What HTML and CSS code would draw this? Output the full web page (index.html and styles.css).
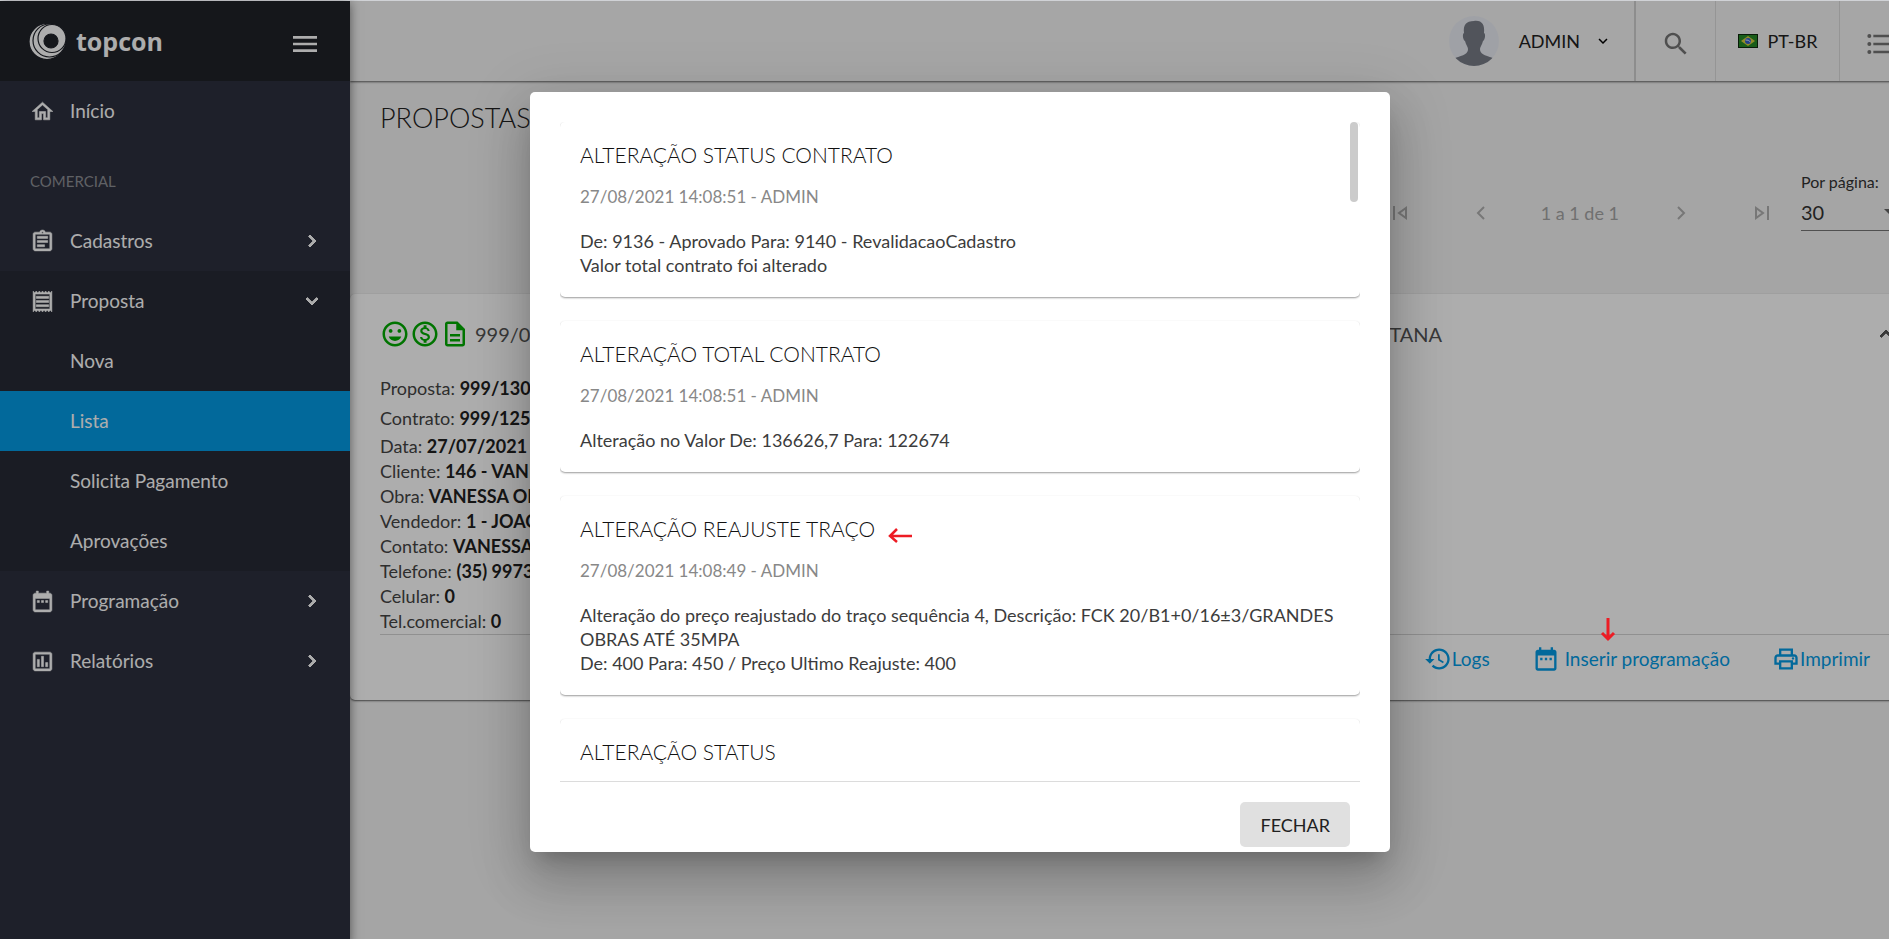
FILE: index.html
```html
<!DOCTYPE html>
<html lang="pt-br">
<head>
    <meta charset="UTF-8">
    <meta name="viewport" content="width=device-width, initial-scale=1.0">
    <title>Topcon - Propostas</title>
    <link rel="stylesheet" href="styles.css">
</head>
<body>
    <div class="app">
        <!-- Menu lateral -->
        <aside class="sidebar">
            <div class="brand">
                <div class="logo">
                    <svg width="38" height="37" viewBox="0 0 38 37" fill="#fff" stroke="#1f2229" stroke-width="1.2">
                        <circle cx="18" cy="18.5" r="18"/>
                        <circle cx="20.500" cy="17.500" r="16.500"/>
                        <circle cx="23" cy="15.500" r="14"/>
                        <circle cx="22" cy="18" r="7" fill="#1f2229"/>
                    </svg>
                    <span>topcon</span>
                </div>
                <button class="icon-button" type="button" aria-label="Menu">
                    <svg width="32" height="32" viewBox="0 0 24 24"><path d="M3 18h18v-2H3v2zm0-5h18v-2H3v2zm0-7v2h18V6H3z"/></svg>
                </button>
            </div>
            <nav class="menu">
                <a class="menu-item" href="#">
                    <svg class="menu-icon" viewBox="0 0 24 24"><path d="M12 5.690l5 4.500V18h-2v-6H9v6H7v-7.810l5-4.500M12 3L2 12h3v8h6v-6h2v6h6v-8h3L12 3z"/></svg>
                    <span>Início</span>
                </a>
                <h3 class="menu-group">COMERCIAL</h3>
                <a class="menu-item" href="#">
                    <svg class="menu-icon" viewBox="0 0 24 24"><path d="M7 15h7v2H7zm0-4h10v2H7zm0-4h10v2H7zm12-4h-4.180C14.400 1.840 13.300 1 12 1c-1.300 0-2.400.840-2.820 2H5c-1.100 0-2 .9-2 2v14c0 1.100.9 2 2 2h14c1.100 0 2-.9 2-2V5c0-1.100-.9-2-2-2zm-7-.25c.410 0 .750.340.750.750s-.340.750-.750.750-.750-.340-.750-.750.340-.750.750-.750zM19 19H5V5h14v14z"/></svg>
                    <span>Cadastros</span>
                    <svg class="menu-arrow" viewBox="0 0 24 24"><path d="M10 6L8.590 7.410 13.170 12l-4.580 4.590L10 18l6-6z"/></svg>
                </a>
                <div class="submenu">
                    <a class="menu-item" href="#">
                        <svg class="menu-icon" viewBox="0 0 24 24"><path d="M19.500 3.500L18 2l-1.500 1.500L15 2l-1.500 1.500L12 2l-1.500 1.500L9 2 7.500 3.500 6 2 4.500 3.500 3 2v20l1.500-1.500L6 22l1.500-1.500L9 22l1.500-1.500L12 22l1.500-1.500L15 22l1.500-1.500L18 22l1.500-1.500L21 22V2l-1.500 1.500zM19 19.090H5V4.910h14v14.180zM6 15h12v2H6zm0-4h12v2H6zm0-4h12v2H6z"/></svg>
                        <span>Proposta</span>
                        <svg class="menu-arrow" viewBox="0 0 24 24"><path d="M16.590 8.590L12 13.170 7.410 8.590 6 10l6 6 6-6z"/></svg>
                    </a>
                    <a class="menu-item sub" href="#"><span>Nova</span></a>
                    <a class="menu-item sub active" href="#"><span>Lista</span></a>
                    <a class="menu-item sub" href="#"><span>Solicita Pagamento</span></a>
                    <a class="menu-item sub" href="#"><span>Aprovações</span></a>
                </div>
                <a class="menu-item" href="#">
                    <svg class="menu-icon" viewBox="0 0 24 24"><path d="M9 11H7v2h2v-2zm4 0h-2v2h2v-2zm4 0h-2v2h2v-2zm2-7h-1V2h-2v2H8V2H6v2H5c-1.110 0-2 .9-2 2v14c0 1.100.890 2 2 2h14c1.100 0 2-.9 2-2V6c0-1.100-.9-2-2-2zm0 16H5V9h14v11z"/></svg>
                    <span>Programação</span>
                    <svg class="menu-arrow" viewBox="0 0 24 24"><path d="M10 6L8.590 7.410 13.170 12l-4.580 4.590L10 18l6-6z"/></svg>
                </a>
                <a class="menu-item" href="#">
                    <svg class="menu-icon" viewBox="0 0 24 24"><path d="M9 17H7v-7h2v7zm4 0h-2V7h2v10zm4 0h-2v-4h2v4zm2 2H5V5h14v14zm0-16H5c-1.100 0-2 .9-2 2v14c0 1.100.9 2 2 2h14c1.100 0 2-.9 2-2V5c0-1.100-.9-2-2-2z"/></svg>
                    <span>Relatórios</span>
                    <svg class="menu-arrow" viewBox="0 0 24 24"><path d="M10 6L8.590 7.410 13.170 12l-4.580 4.590L10 18l6-6z"/></svg>
                </a>
            </nav>
        </aside>

        <div class="main">
            <!-- Barra superior -->
            <header class="toolbar">
                <button class="user" type="button">
                    <svg class="avatar" width="50" height="50" viewBox="0 0 50 50">
                        <defs><clipPath id="round"><circle cx="25" cy="25" r="25"/></clipPath></defs>
                        <circle cx="25" cy="25" r="25" fill="#ebeef5"/>
                        <path clip-path="url(#round)" d="M25 5c8-1 11 4 10 12 2 1 1 7-1 8-1 4-3 6-3 8 0 5 4 6 13 9v8H6v-8c9-3 13-4 13-9 0-2-2-4-3-8-2-1-3-7-1-8C14 9 17 5 25 5z" fill="#787c87"/>
                    </svg>
                    <span>ADMIN</span>
                    <svg width="18" height="18" viewBox="0 0 24 24"><path d="M16.590 8.590L12 13.170 7.410 8.590 6 10l6 6 6-6z"/></svg>
                </button>
                <button class="tool search" type="button" aria-label="Pesquisar">
                    <svg width="30" height="30" viewBox="0 0 24 24" fill="#757575"><path d="M15.500 14h-.790l-.280-.270C15.410 12.590 16 11.110 16 9.500 16 5.910 13.090 3 9.500 3S3 5.910 3 9.500 5.910 16 9.500 16c1.610 0 3.090-.590 4.230-1.570l.270.280v.790l5 4.990L20.490 19l-4.990-5zm-6 0C7.010 14 5 11.990 5 9.500S7.010 5 9.500 5 14 7.010 14 9.500 11.990 14 9.500 14z"/></svg>
                </button>
                <button class="tool language" type="button">
                    <svg width="20" height="14" viewBox="0 0 20 14"><path fill="#0c290c" d="M0 0h20v14H0z"/><path fill="#268a26" d="M1 1h18v12H1z"/><path fill="#d8cf3c" d="M10 2l7 5-7 5-7-5z"/><circle cx="10" cy="7" r="3" fill="#3460c8"/><path d="M7.500 6q3-.5 5 2" stroke="#dfe8ff" fill="none"/></svg>
                    <span>PT-BR</span>
                </button>
                <button class="tool" type="button" aria-label="Atalhos">
                    <svg width="32" height="32" viewBox="0 0 24 24" fill="#757575"><path d="M4 10.500a1.500 1.500 0 1 0 0 3 1.500 1.500 0 0 0 0-3zm0-6a1.500 1.500 0 1 0 0 3 1.500 1.500 0 0 0 0-3zm0 12a1.500 1.500 0 1 0 0 3 1.500 1.500 0 0 0 0-3zM7 19h14v-2H7v2zm0-6h14v-2H7v2zm0-8v2h14V5H7z"/></svg>
                </button>
            </header>

            <main class="content">
                <h1>PROPOSTAS</h1>
                <div class="paginator">
                    <button class="page-button" type="button" disabled aria-label="Primeira"><svg viewBox="0 0 24 24"><path d="M5 5v14M17 7v10l-7-5z"/></svg></button>
                    <button class="page-button" type="button" disabled aria-label="Anterior"><svg viewBox="0 0 24 24"><path d="M15 6l-6 6 6 6"/></svg></button>
                    <span class="page-range">1 a 1 de 1</span>
                    <button class="page-button" type="button" disabled aria-label="Próxima"><svg viewBox="0 0 24 24"><path d="M9 6l6 6-6 6"/></svg></button>
                    <button class="page-button" type="button" disabled aria-label="Última"><svg viewBox="0 0 24 24"><path d="M19 5v14M7 7v10l7-5z"/></svg></button>
                    <div class="page-size">
                        <label for="pageSize">Por página:</label>
                        <div class="select-wrap">
                            <select id="pageSize">
                                <option>30</option>
                                <option>60</option>
                            </select>
                            <svg width="12" height="6" viewBox="0 0 12 6"><path d="M0 0h12L6 6z" fill="#666"/></svg>
                        </div>
                    </div>
                </div>

                <section class="proposal">
                    <div class="proposal-head">
                        <div class="status">
                            <svg viewBox="0 0 24 24"><path d="M11.990 2C6.470 2 2 6.480 2 12s4.470 10 9.990 10C17.520 22 22 17.520 22 12S17.520 2 11.990 2zM12 20c-4.420 0-8-3.580-8-8s3.580-8 8-8 8 3.580 8 8-3.580 8-8 8zm3.500-9c.830 0 1.500-.670 1.500-1.500S16.330 8 15.500 8 14 8.670 14 9.500s.670 1.500 1.500 1.500zm-7 0c.830 0 1.500-.670 1.500-1.500S9.330 8 8.500 8 7 8.670 7 9.500 7.670 11 8.500 11zM7 14c.8 2.300 2.700 3.500 5 3.500s4.200-1.200 5-3.500z"/></svg>
                            <svg viewBox="0 0 24 24"><path d="M12 2C6.480 2 2 6.480 2 12s4.480 10 10 10 10-4.480 10-10S17.520 2 12 2zm0 18c-4.410 0-8-3.590-8-8s3.590-8 8-8 8 3.590 8 8-3.590 8-8 8zm.310-8.860c-1.770-.450-2.340-.940-2.340-1.670 0-.840.790-1.430 2.100-1.430 1.380 0 1.900.660 1.940 1.640h1.710c-.050-1.340-.870-2.570-2.490-2.970V5H10.900v1.690c-1.510.320-2.720 1.300-2.720 2.810 0 1.790 1.490 2.690 3.660 3.210 1.950.460 2.340 1.150 2.340 1.870 0 .530-.390 1.390-2.100 1.390-1.600 0-2.230-.720-2.320-1.640H8.040c.1 1.700 1.360 2.660 2.860 2.970V19h2.340v-1.670c1.520-.290 2.720-1.160 2.730-2.770-.010-2.200-1.900-2.960-3.660-3.420z"/></svg>
                            <svg viewBox="0 0 24 24"><path d="M8 16h8v2H8zm0-4h8v2H8zm6-10H6c-1.100 0-2 .9-2 2v16c0 1.100.890 2 1.990 2H18c1.100 0 2-.9 2-2V8l-6-6zm4 18H6V4h7v5h5v11z"/></svg>
                            <span>999/00130</span>
                        </div>
                        <div class="proposal-city">SANTANA</div>
                        <button class="icon-button" type="button" aria-label="Recolher">
                            <svg width="24" height="24" viewBox="0 0 24 24"><path d="M12 8l-6 6 1.410 1.410L12 10.830l4.590 4.580L18 14z"/></svg>
                        </button>
                    </div>
                    <div class="proposal-numbers">
                        <p>Proposta: <b>999/130-1</b></p>
                        <p>Contrato: <b>999/125-1</b></p>
                    </div>
                    <div class="proposal-data">
                        <p>Data: <b>27/07/2021</b></p>
                        <p>Cliente: <b>146 - VANESSA</b></p>
                        <p>Obra: <b>VANESSA OBRA</b></p>
                        <p>Vendedor: <b>1 - JOAO</b></p>
                        <p>Contato: <b>VANESSA</b></p>
                        <p>Telefone: <b>(35) 99730</b></p>
                        <p>Celular: <b>0</b></p>
                        <p>Tel.comercial: <b>0</b></p>
                    </div>
                    <div class="actions">
                        <a class="action" href="#">
                            <svg viewBox="0 0 24 24"><path d="M13 3c-4.970 0-9 4.030-9 9H1l3.890 3.890.070.140L9 12H6c0-3.870 3.130-7 7-7s7 3.130 7 7-3.130 7-7 7c-1.930 0-3.680-.790-4.940-2.060l-1.420 1.420C8.270 19.990 10.510 21 13 21c4.970 0 9-4.030 9-9s-4.030-9-9-9zm-1 5v5l4.280 2.540.720-1.210-3.500-2.080V8H12z"/></svg>
                            <span>Logs</span>
                        </a>
                        <a class="action spaced" href="#">
                            <svg viewBox="0 0 24 24"><path d="M9 11H7v2h2v-2zm4 0h-2v2h2v-2zm4 0h-2v2h2v-2zm2-7h-1V2h-2v2H8V2H6v2H5c-1.110 0-2 .9-2 2v14c0 1.100.890 2 2 2h14c1.100 0 2-.9 2-2V6c0-1.100-.9-2-2-2zm0 16H5V9h14v11z"/></svg>
                            <span>Inserir programação</span>
                            <svg class="arrow-down" viewBox="0 0 16 26"><path d="M8 1v21M2 16l6 6 6-6" fill="none" stroke="#ed1c24" stroke-width="3"/></svg>
                        </a>
                        <a class="action" href="#">
                            <svg viewBox="0 0 24 24"><path d="M19 8h-1V3H6v5H5c-1.660 0-3 1.340-3 3v6h4v4h12v-4h4v-6c0-1.660-1.340-3-3-3zM8 5h8v3H8V5zm8 12v2H8v-4h8v2zm2-2v-2H6v2H4v-4c0-.550.450-1 1-1h14c.550 0 1 .450 1 1v4h-2z"/><circle cx="18" cy="11.500" r="1"/></svg>
                            <span>Imprimir</span>
                        </a>
                    </div>
                </section>
            </main>
        </div>

        <!-- Logs da proposta -->
        <div class="overlay">
            <div class="dialog" role="dialog" aria-label="Logs">
                <div class="dialog-body">
                    <article class="log">
                        <h2>ALTERAÇÃO STATUS CONTRATO</h2>
                        <p class="log-date">27/08/2021 14:08:51 - ADMIN</p>
                        <p>De: 9136 - Aprovado Para: 9140 - RevalidacaoCadastro</p>
                        <p>Valor total contrato foi alterado</p>
                    </article>
                    <article class="log">
                        <h2>ALTERAÇÃO TOTAL CONTRATO</h2>
                        <p class="log-date">27/08/2021 14:08:51 - ADMIN</p>
                        <p>Alteração no Valor De: 136626,7 Para: 122674</p>
                    </article>
                    <article class="log">
                        <h2>ALTERAÇÃO REAJUSTE TRAÇO
                            <svg width="26" height="16" viewBox="0 0 26 16"><path d="M25 9H3M10 2L3 9l7 6" fill="none" stroke="#ed1c24" stroke-width="2.500"/></svg>
                        </h2>
                        <p class="log-date">27/08/2021 14:08:49 - ADMIN</p>
                        <p>Alteração do preço reajustado do traço sequência 4, Descrição: FCK 20/B1+0/16±3/GRANDES OBRAS ATÉ 35MPA</p>
                        <p>De: 400 Para: 450 / Preço Ultimo Reajuste: 400</p>
                    </article>
                    <article class="log">
                        <h2>ALTERAÇÃO STATUS</h2>
                    </article>
                    <div class="scroll-thumb"></div>
                </div>
                <div class="dialog-actions">
                    <button class="close" type="button">FECHAR</button>
                </div>
            </div>
        </div>
    </div>
</body>
</html>
```
FILE: styles.css
```css
* {
    box-sizing: border-box;
}

body {
    margin: 0;
    font-family: Lato, "Open Sans", sans-serif;
    font-size: 18px;
    line-height: 24px;
    color: #212121;
    background: #f3f3f3;
    overflow: hidden;
}

h1, h2, h3, p {
    margin: 0;
    font-weight: normal;
}

a {
    color: inherit;
    text-decoration: none;
}

button {
    font: inherit;
    color: inherit;
    background: none;
    border: none;
    padding: 0;
}

/* a pagina passa um pouco da borda direita e de baixo */
.app {
    position: relative;
    display: flex;
    margin-right: -31px;
    height: calc(100vh + 4px);
    border-top: 1px solid #dadce0;
}

/* Menu lateral */
.sidebar {
    position: relative;
    z-index: 1;
    flex: 0 0 350px;
    background: #2d303e;
    color: #fff;
    box-shadow: 0 2px 10px rgba(0, 0, 0, 0.5);
}

.brand {
    display: flex;
    justify-content: space-between;
    align-items: center;
    height: 80px;
    padding: 0 29px;
    background: #1f2229;
}

.logo {
    display: flex;
    align-items: center;
    gap: 9px;
    font-family: "Open Sans", sans-serif;
    font-size: 25px;
    font-weight: 700;
}

.icon-button {
    display: flex;
}

.brand .icon-button {
    margin-top: 6px;
    fill: #fff;
}

.menu-item {
    display: flex;
    align-items: center;
    height: 60px;
    padding: 0 26px 0 30px;
    font-size: 19px;
}

.menu-icon {
    width: 25px;
    height: 25px;
    margin-right: 15px;
    fill: #fff;
    stroke: #fff;
    stroke-width: 0.5;
}

.menu-arrow {
    width: 24px;
    height: 24px;
    margin-left: auto;
    fill: #fff;
    stroke: #fff;
}

.menu-group {
    height: 70px;
    padding: 28px 30px 0;
    font-size: 15px;
    color: #8d8f96;
}

.submenu {
    background: #272a36;
}

.sub {
    padding-left: 70px;
}

.active {
    background: #039be5;
}

/* Barra superior */
.main {
    flex: 1;
    min-width: 0;
}

.toolbar {
    position: relative;
    display: flex;
    justify-content: flex-end;
    height: 80px;
    background: #f5f5f5;
    box-shadow: 0 1px 2px rgba(0, 0, 0, 0.6);
}

.user {
    display: flex;
    align-items: center;
    padding-right: 22px;
}

.avatar {
    margin-right: 20px;
}

.user span {
    margin-right: 14px;
}

.tool {
    display: flex;
    align-items: center;
    justify-content: center;
    width: 81px;
    padding-top: 6px;
    border-left: 1px solid #dcdcdc;
}

.search {
    border-left: 2px solid #d0d0d0;
}

.language {
    width: 124px;
    padding: 0;
    gap: 10px;
}

.content h1 {
    padding: 23px 30px 0;
    font-size: 27px;
    font-weight: 300;
    line-height: 28px;
}

.paginator {
    display: flex;
    justify-content: flex-end;
    align-items: flex-end;
    height: 99px;
    padding-right: 24px;
    color: #a6a6a6;
}

.page-button {
    display: flex;
    margin: 0 0 6px 56px;
}

.page-button svg {
    width: 24px;
    height: 24px;
    fill: none;
    stroke: #b0b0b0;
    stroke-width: 2;
}

.page-range {
    margin: 0 -6px 6px 48px;
}

.page-size {
    width: 95px;
    margin-left: 28px;
    color: #333;
}

.page-size label {
    display: block;
    font-size: 16px;
}

.select-wrap {
    display: flex;
    align-items: center;
    border-bottom: 1px solid #777;
}

.select-wrap select {
    flex: 1;
    height: 36px;
    border: none;
    background: none;
    appearance: none;
    font: inherit;
    font-size: 20px;
    color: inherit;
}

/* Proposta */
.proposal {
    margin-top: 63px;
    padding: 25px 30px 25px;
    background: #fff;
    border-radius: 5px;
    box-shadow: 0 1px 2px rgba(0, 0, 0, 0.6);
}

.proposal-head, .status {
    display: flex;
    align-items: center;
    font-size: 20px;
    color: #555;
}

.status {
    flex: 0 0 970px;
}

.status svg {
    width: 30px;
    height: 30px;
    fill: #00ab00;
}

.status span {
    margin-left: 5px;
}

.proposal-city {
    flex: 1;
}

.proposal-head .icon-button {
    margin-right: -8px;
    fill: #555;
    stroke: #555;
}

.proposal-numbers {
    margin-top: 24px;
    line-height: 30px;
}

.proposal-data {
    margin-top: 1px;
    line-height: 25px;
    border-bottom: 1px solid #d5d5d5;
}

.proposal p {
    color: #444;
}

.proposal b {
    font-weight: 700;
    color: #212121;
}

.actions {
    display: flex;
    justify-content: flex-end;
    gap: 42px;
    padding: 10px 20px 2px 0;
    font-size: 19px;
    color: #039be5;
}

.action {
    position: relative;
    display: flex;
    align-items: center;
}

.action svg {
    width: 28px;
    height: 28px;
    fill: #039be5;
}

.spaced {
    gap: 5px;
}

.action .arrow-down {
    position: absolute;
    z-index: 3;
    left: 68px;
    bottom: 30px;
    width: 16px;
    height: 26px;
}

/* Janela de logs */
.overlay {
    position: absolute;
    z-index: 2;
    inset: 0;
    display: flex;
    align-items: center;
    justify-content: center;
    background: rgba(0, 0, 0, 0.32);
}

.dialog {
    width: 860px;
    padding: 30px 30px 5px;
    background: #fff;
    border-radius: 5px;
    box-shadow: 0 14px 19px -9px rgba(0, 0, 0, 0.2), 0 30px 48px 4px rgba(0, 0, 0, 0.14), 0 12px 58px 10px rgba(0, 0, 0, 0.12);
}

.dialog-body {
    position: relative;
    height: 660px;
    overflow: hidden;
    border-bottom: 1px solid #dcdcdc;
}

.log {
    margin-bottom: 24px;
    padding: 19px 20px 20px;
    border-radius: 5px;
    color: #3c3c3c;
    box-shadow: 0 1px 2px rgba(0, 0, 0, 0.4);
}

.log h2 {
    display: flex;
    align-items: flex-end;
    gap: 12px;
    font-size: 21px;
    font-weight: 300;
    line-height: 28px;
    color: #111;
}

.log .log-date {
    margin: 16px 0 20px;
    font-size: 17px;
    color: #888;
}

.scroll-thumb {
    position: absolute;
    top: 0;
    right: 2px;
    width: 8px;
    height: 80px;
    border-radius: 4px;
    background: #cbcbcb;
}

.dialog-actions {
    display: flex;
    justify-content: flex-end;
    padding: 20px 10px 0;
}

.close {
    height: 45px;
    padding: 0 20px;
    border-radius: 5px;
    background: #e0e0e0;
}
```
